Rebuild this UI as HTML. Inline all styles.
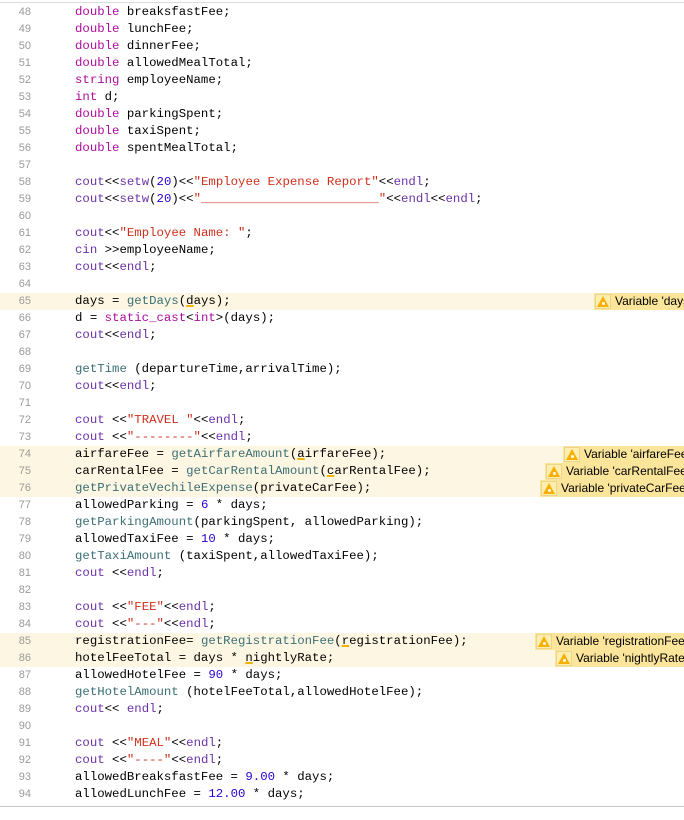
<!DOCTYPE html>
<html><head><meta charset="utf-8"><style>
html,body{margin:0;padding:0;width:684px;height:814px;overflow:hidden;background:#fff}
.top{position:absolute;left:0;top:2px;width:684px;height:1px;background:#dcdcdc}
.bot{position:absolute;left:0;top:806px;width:684px;height:1px;background:#c8c8c8}
.ln{position:absolute;left:0;width:684px;height:17px;font-family:"Liberation Mono",monospace;font-size:12.35px;line-height:17px;color:#000;white-space:pre}
.ln.hl{background:#fdf6e2}
.num{position:absolute;left:0;width:31px;text-align:right;font-family:"Liberation Sans",sans-serif;font-size:11px;color:#9a9a9a}
.code{position:absolute;left:75px}
.k{color:#ad0d9c}.p{color:#6b32a8}.s{color:#d12f1b}.n{color:#2a00d2}.f{color:#3b6f75}
.u{text-decoration:underline;text-decoration-color:#f0b400;text-decoration-thickness:2px}
.w{position:absolute;top:0;right:0;height:17px;background:#fbe59a;font-family:"Liberation Sans",sans-serif;font-size:12px;line-height:17px;color:#000;overflow:hidden}
.w i{display:inline-block;vertical-align:top;margin:1px 4px 0 1px;width:16px;height:15px;background:#fdeeb0;border:1px solid #ecd48a;box-sizing:border-box;position:relative}
.w i:before{content:"";position:absolute;left:1px;top:1px;border-left:6px solid transparent;border-right:6px solid transparent;border-bottom:11px solid #f7b000}
.w i:after{content:"";position:absolute;left:5.5px;top:7px;width:3px;height:3px;background:#fff;border-radius:2px}
</style></head><body>
<div class="top"></div>
<div id="c"></div>
<div class="bot"></div>
<script>
var L={
48:'<span class="k">double</span> breaksfastFee;',
49:'<span class="k">double</span> lunchFee;',
50:'<span class="k">double</span> dinnerFee;',
51:'<span class="k">double</span> allowedMealTotal;',
52:'<span class="k">string</span> employeeName;',
53:'<span class="k">int</span> d;',
54:'<span class="k">double</span> parkingSpent;',
55:'<span class="k">double</span> taxiSpent;',
56:'<span class="k">double</span> spentMealTotal;',
57:'',
58:'<span class="p">cout</span>&lt;&lt;<span class="p">setw</span>(<span class="n">20</span>)&lt;&lt;<span class="s">"Employee Expense Report"</span>&lt;&lt;<span class="p">endl</span>;',
59:'<span class="p">cout</span>&lt;&lt;<span class="p">setw</span>(<span class="n">20</span>)&lt;&lt;<span class="s">"________________________"</span>&lt;&lt;<span class="p">endl</span>&lt;&lt;<span class="p">endl</span>;',
60:'',
61:'<span class="p">cout</span>&lt;&lt;<span class="s">"Employee Name: "</span>;',
62:'<span class="p">cin</span> &gt;&gt;employeeName;',
63:'<span class="p">cout</span>&lt;&lt;<span class="p">endl</span>;',
64:'',
65:'days = <span class="f">getDays</span>(<span class="u">d</span>ays);',
66:'d = <span class="k">static_cast</span>&lt;<span class="k">int</span>&gt;(days);',
67:'<span class="p">cout</span>&lt;&lt;<span class="p">endl</span>;',
68:'',
69:'<span class="f">getTime</span> (departureTime,arrivalTime);',
70:'<span class="p">cout</span>&lt;&lt;<span class="p">endl</span>;',
71:'',
72:'<span class="p">cout</span> &lt;&lt;<span class="s">"TRAVEL "</span>&lt;&lt;<span class="p">endl</span>;',
73:'<span class="p">cout</span> &lt;&lt;<span class="s">"--------"</span>&lt;&lt;<span class="p">endl</span>;',
74:'airfareFee = <span class="f">getAirfareAmount</span>(<span class="u">a</span>irfareFee);',
75:'carRentalFee = <span class="f">getCarRentalAmount</span>(<span class="u">c</span>arRentalFee);',
76:'<span class="f">getPrivateVechileExpense</span>(privateCarFee);',
77:'allowedParking = <span class="n">6</span> * days;',
78:'<span class="f">getParkingAmount</span>(parkingSpent, allowedParking);',
79:'allowedTaxiFee = <span class="n">10</span> * days;',
80:'<span class="f">getTaxiAmount</span> (taxiSpent,allowedTaxiFee);',
81:'<span class="p">cout</span> &lt;&lt;<span class="p">endl</span>;',
82:'',
83:'<span class="p">cout</span> &lt;&lt;<span class="s">"FEE"</span>&lt;&lt;<span class="p">endl</span>;',
84:'<span class="p">cout</span> &lt;&lt;<span class="s">"---"</span>&lt;&lt;<span class="p">endl</span>;',
85:'registrationFee= <span class="f">getRegistrationFee</span>(<span class="u">r</span>egistrationFee);',
86:'hotelFeeTotal = days * <span class="u">n</span>ightlyRate;',
87:'allowedHotelFee = <span class="n">90</span> * days;',
88:'<span class="f">getHotelAmount</span> (hotelFeeTotal,allowedHotelFee);',
89:'<span class="p">cout</span>&lt;&lt; <span class="p">endl</span>;',
90:'',
91:'<span class="p">cout</span> &lt;&lt;<span class="s">"MEAL"</span>&lt;&lt;<span class="p">endl</span>;',
92:'<span class="p">cout</span> &lt;&lt;<span class="s">"----"</span>&lt;&lt;<span class="p">endl</span>;',
93:'allowedBreaksfastFee = <span class="n">9.00</span> * days;',
94:'allowedLunchFee = <span class="n">12.00</span> * days;'
};
var W={65:[594,"Variable 'days'"],74:[563,"Variable 'airfareFee'"],75:[545,"Variable 'carRentalFee'"],76:[540,"Variable 'privateCarFee'"],85:[535,"Variable 'registrationFee'"],86:[555,"Variable 'nightlyRate'"]};
var h='';
for(var n=48;n<=95;n++){
 var t=3.5+(n-48)*17.02;
 var hl=W[n]?' hl':'';
 var c=L[n]===undefined?'':L[n];
 h+='<div class="ln'+hl+'" style="top:'+t.toFixed(2)+'px"><span class="num">'+(n<=94?n:'')+'</span><span class="code">'+c+'</span>';
 if(W[n])h+='<span class="w" style="left:'+W[n][0]+'px"><i></i>'+W[n][1]+'</span>';
 h+='</div>';
}
document.getElementById('c').innerHTML=h;
</script>
</body></html>
